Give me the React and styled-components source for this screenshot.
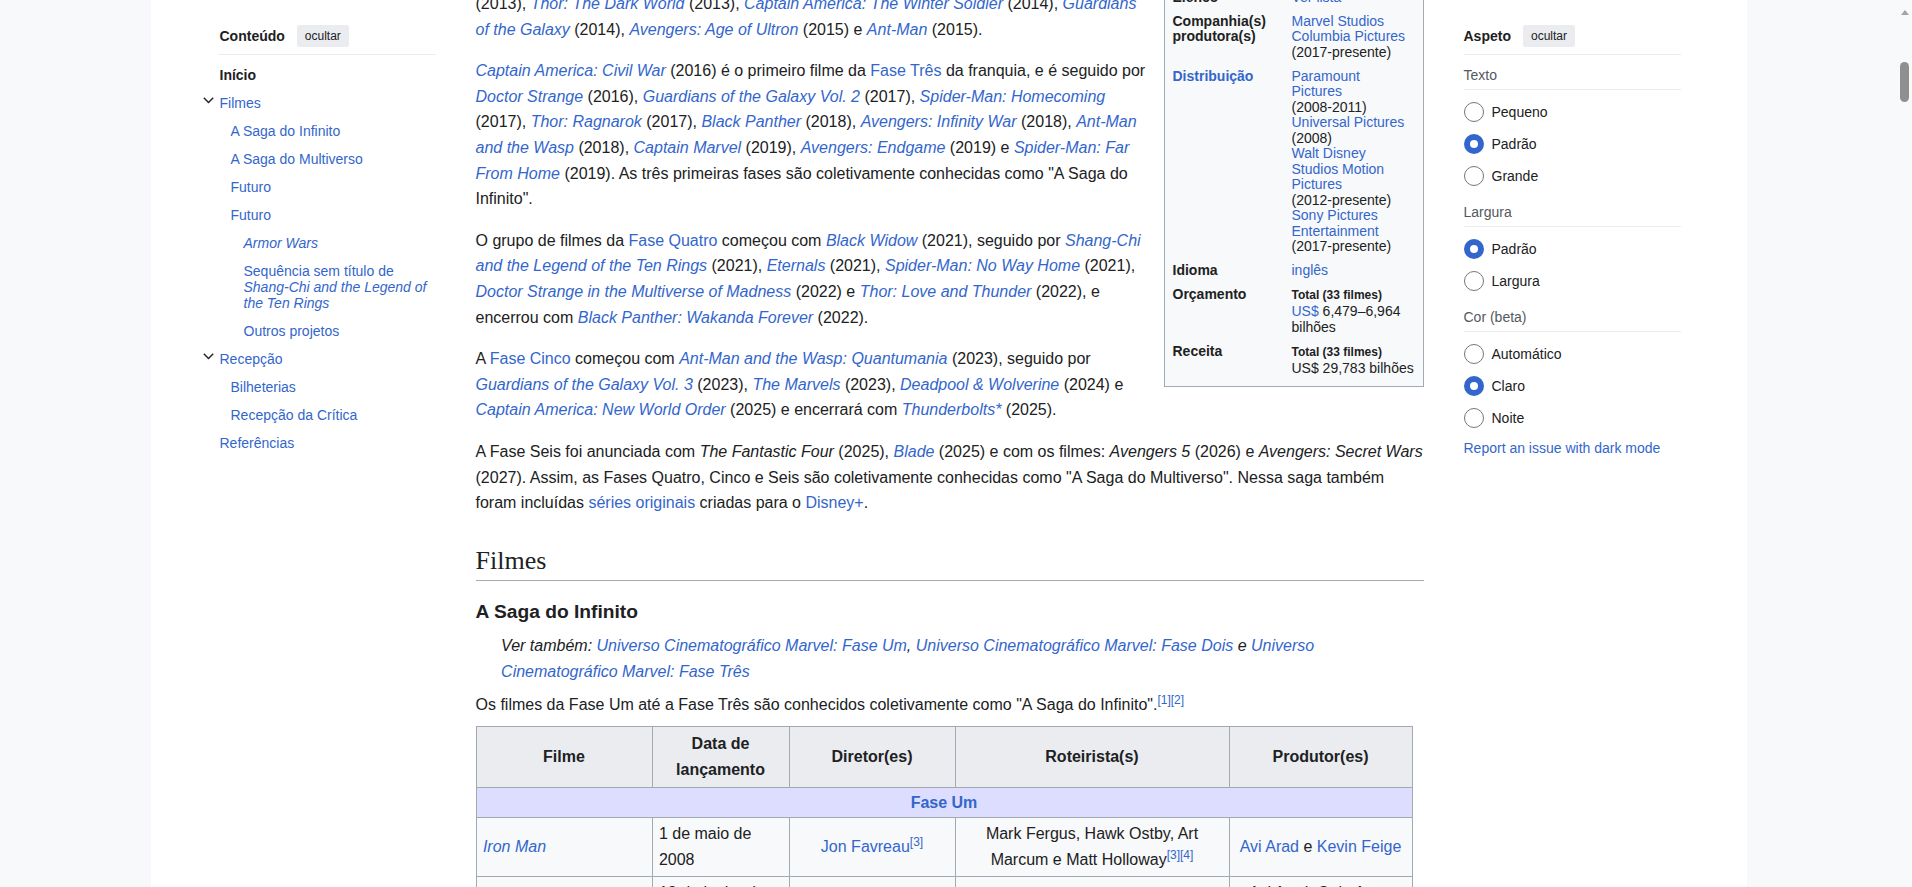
import React from "react";
import styled, { createGlobalStyle } from "styled-components";

const GlobalStyle = createGlobalStyle`
  html, body {
    margin: 0;
    background: #f8f9fa;
  }
  body {
    font-family: "Liberation Sans", Arial, sans-serif;
    color: #202122;
  }
`;

const Shell = styled.div`
  display: flex;
  align-items: stretch;
`;

const Viewport = styled.div`
  flex: 1;
  min-width: 0;
`;

const ScrollGutter = styled.div`
  flex: 0 0 15px;
  display: flex;
  flex-direction: column;
  align-items: center;
  background: #f8f9fa;
`;

const ScrollArrow = styled.span`
  margin-top: 10px;
  width: 0;
  height: 0;
  border-left: 4px solid transparent;
  border-right: 4px solid transparent;
  border-bottom: 5px solid #a3a3a3;
`;

const ScrollThumb = styled.span`
  margin-top: 47px;
  width: 9px;
  height: 40px;
  border-radius: 5px;
  background: #8f8f8f;
`;

const PageContainer = styled.div`
  max-width: 1596px;
  margin: 0 auto;
  box-sizing: border-box;
  padding: 0 66px 0 67px;
  background: #fff;
  overflow: hidden;
`;

const Columns = styled.div`
  display: grid;
  grid-template-columns: 218px 948px 217px;
  column-gap: 40px;
`;

const SidePanel = styled.nav`
  align-self: start;
  padding-top: 25px;
  font-size: 14px;
  line-height: 16px;
`;

const PanelHeader = styled.div`
  display: flex;
  align-items: center;
  gap: 12px;
  height: 22px;
  padding: 0 0 7px ${({ $inset }) => $inset || 0}px;
  border-bottom: 1px solid #eaecf0;
`;

const PanelTitle = styled.span`
  font-weight: bold;
`;

const HideButton = styled.button`
  height: 22px;
  padding: 0 8px;
  border: 0;
  border-radius: 2px;
  background: #eaecf0;
  color: #202122;
  font-family: "Liberation Sans", Arial, sans-serif;
  font-size: 12px;
  cursor: pointer;
`;

const TocList = styled.ul`
  list-style: none;
  margin: 0;
  padding: 6px 0 0;
`;

const TocItem = styled.li`
  display: flex;
  align-items: flex-start;
  padding: 6px 0 6px ${({ $indent }) => $indent}px;
`;

const TocLink = styled.a`
  color: ${({ $active }) => ($active ? "#202122" : "#36c")};
  font-weight: ${({ $active }) => ($active ? "bold" : "normal")};
  text-decoration: none;
`;

const Toggle = styled.span`
  display: inline-flex;
  width: 11px;
  height: 16px;
  align-items: center;
  margin: -3px 6px 0 -17px;
  color: #202122;
`;

const SubHeading = styled.div`
  color: #54595d;
  padding: 12px 0 6px;
  border-bottom: 1px solid #eaecf0;
`;

const RadioList = styled.div`
  padding-top: 6px;
`;

const RadioRow = styled.label`
  display: flex;
  align-items: center;
  gap: 8px;
  height: 32px;
`;

const RadioCircle = styled.span`
  box-sizing: border-box;
  width: 20px;
  height: 20px;
  border-radius: 50%;
  background: #fff;
  border: ${({ $checked }) =>
    $checked ? "6px solid #36c" : "1px solid #72777d"};
`;

const ReportLink = styled.a`
  display: block;
  margin-top: 6px;
  color: #36c;
  text-decoration: none;
`;

const Main = styled.main`
  min-width: 0;
  font-size: 16px;
  line-height: 1.6;
  padding-bottom: 40px;
`;

/* the article is seen scrolled: its first line sits above the window edge */
const ScrolledSection = styled.div`
  margin-top: -34.5px;
`;

const Paragraph = styled.p`
  margin: 0 0 ${({ $tight }) => ($tight ? 8 : 16)}px;
`;

const Link = styled.a`
  color: #36c;
  text-decoration: none;
  font-style: ${({ $italic }) => ($italic ? "italic" : "inherit")};
`;

const Ref = styled.sup`
  font-size: 12px;
  line-height: 1;
  vertical-align: super;
  color: #36c;
`;

const Infobox = styled.aside`
  float: right;
  box-sizing: border-box;
  width: 260px;
  margin: -5px 0 8px 14px;
  padding-bottom: 5px;
  border: 1px solid #a2a9b1;
  background: #f8f9fa;
  font-size: 14px;
  line-height: 15.5px;
`;

const InfoRow = styled.div`
  display: grid;
  grid-template-columns: 119px 1fr;
  padding: 4.25px 8px;
`;

const InfoLabel = styled.div`
  font-weight: bold;
  color: ${({ $link }) => ($link ? "#36c" : "#202122")};
`;

const InfoValue = styled.div`
  white-space: nowrap;
`;

const TotalNote = styled.span`
  display: block;
  font-size: 12px;
  font-weight: bold;
  line-height: 17px;
`;

const Heading2 = styled.h2`
  margin: 27px 0 0;
  padding-bottom: 1px;
  border-bottom: 1px solid #a2a9b1;
  font-family: "Liberation Serif", "Times New Roman", serif;
  font-weight: normal;
  font-size: 26px;
  line-height: 36px;
`;

const Heading3 = styled.h3`
  margin: 16px 0 6.4px;
  font-size: 19.2px;
  line-height: 30px;
  font-weight: bold;
`;

const Hatnote = styled.div`
  font-style: italic;
  padding-left: 25.6px;
  margin-bottom: 8px;
`;

const FilmTable = styled.table`
  width: 937px;
  table-layout: fixed;
  border-collapse: collapse;
  border: 1px solid #a2a9b1;
  background: #f8f9fa;
  color: #202122;
`;

const Th = styled.th`
  padding: 4.2px 6.4px;
  border: 1px solid #a2a9b1;
  background: #eaecf0;
  font-weight: bold;
  text-align: center;
`;

const Td = styled.td`
  padding: 3.2px 6.4px;
  border: 1px solid #a2a9b1;
  text-align: ${({ $align }) => $align || "left"};
`;

const PhaseCell = styled.td`
  padding: 2.1px 6.4px;
  border: 1px solid #a2a9b1;
  background: #ddf;
  font-weight: bold;
  text-align: center;
`;

const ChevronIcon = () => (
  <svg width="11" height="7" viewBox="0 0 11 7" fill="none">
    <path d="M0.8 0.8 L5.5 5.6 L10.2 0.8" stroke="currentColor" strokeWidth="1.4" />
  </svg>
);

const tocItems = [
  { label: "Início", indent: 2, active: true },
  { label: "Filmes", indent: 2, toggle: true },
  { label: "A Saga do Infinito", indent: 13 },
  { label: "A Saga do Multiverso", indent: 13 },
  { label: "Futuro", indent: 13 },
  { label: "Futuro", indent: 13 },
  { label: <i>Armor Wars</i>, indent: 26 },
  {
    label: (
      <>
        Sequência sem título de <i>Shang-Chi and the Legend of the Ten Rings</i>
      </>
    ),
    indent: 26,
  },
  { label: "Outros projetos", indent: 26 },
  { label: "Recepção", indent: 2, toggle: true },
  { label: "Bilheterias", indent: 13 },
  { label: "Recepção da Crítica", indent: 13 },
  { label: "Referências", indent: 2 },
];

const appearance = [
  { title: "Texto", options: ["Pequeno", "Padrão", "Grande"], checked: 1 },
  { title: "Largura", options: ["Padrão", "Largura"], checked: 0 },
  { title: "Cor (beta)", options: ["Automático", "Claro", "Noite"], checked: 1 },
];

const films = [
  ["The Incredible Hulk", "13 de junho de 2008", "Louis Leterrier", "Zak Penn", "Avi Arad, Gale Anne Hurd e Kevin Feige"],
  ["Iron Man 2", "7 de maio de 2010", "Jon Favreau", "Justin Theroux", "Kevin Feige"],
  ["Thor", "6 de maio de 2011", "Kenneth Branagh", "Ashley Edward Miller, Zack Stentz e Don Payne", "Kevin Feige"],
];

const T = ({ children }) => <Link $italic>{children}</Link>;

const App = () => {
  return (
    <>
      <GlobalStyle />
      <Shell>
        <Viewport>
          <PageContainer>
            <Columns>
              <SidePanel>
                <PanelHeader $inset={2}>
                  <PanelTitle>Conteúdo</PanelTitle>
                  <HideButton>ocultar</HideButton>
                </PanelHeader>
                <TocList>
                  {tocItems.map((item, index) => (
                    <TocItem key={index} $indent={item.indent}>
                      {item.toggle && (
                        <Toggle>
                          <ChevronIcon />
                        </Toggle>
                      )}
                      <TocLink $active={item.active}>{item.label}</TocLink>
                    </TocItem>
                  ))}
                </TocList>
              </SidePanel>

              <Main>
                <ScrolledSection>
                  <Infobox>
                    <InfoRow>
                      <InfoLabel>Baseado em</InfoLabel>
                      <InfoValue>
                        <Link>Marvel Comics</Link>
                      </InfoValue>
                    </InfoRow>
                    <InfoRow>
                      <InfoLabel>Elenco</InfoLabel>
                      <InfoValue>
                        <Link>Ver lista</Link>
                      </InfoValue>
                    </InfoRow>
                    <InfoRow>
                      <InfoLabel>
                        Companhia(s)
                        <br />
                        produtora(s)
                      </InfoLabel>
                      <InfoValue>
                        <Link>Marvel Studios</Link>
                        <br />
                        <Link>Columbia Pictures</Link>
                        <br />
                        (2017-presente)
                      </InfoValue>
                    </InfoRow>
                    <InfoRow>
                      <InfoLabel $link>Distribuição</InfoLabel>
                      <InfoValue>
                        <Link>Paramount</Link>
                        <br />
                        <Link>Pictures</Link>
                        <br />
                        (2008-2011)
                        <br />
                        <Link>Universal Pictures</Link>
                        <br />
                        (2008)
                        <br />
                        <Link>Walt Disney</Link>
                        <br />
                        <Link>Studios Motion</Link>
                        <br />
                        <Link>Pictures</Link>
                        <br />
                        (2012-presente)
                        <br />
                        <Link>Sony Pictures</Link>
                        <br />
                        <Link>Entertainment</Link>
                        <br />
                        (2017-presente)
                      </InfoValue>
                    </InfoRow>
                    <InfoRow>
                      <InfoLabel>Idioma</InfoLabel>
                      <InfoValue>
                        <Link>inglês</Link>
                      </InfoValue>
                    </InfoRow>
                    <InfoRow>
                      <InfoLabel>Orçamento</InfoLabel>
                      <InfoValue>
                        <TotalNote>Total (33 filmes)</TotalNote>
                        <Link>US$</Link> 6,479–6,964
                        <br />
                        bilhões
                      </InfoValue>
                    </InfoRow>
                    <InfoRow>
                      <InfoLabel>Receita</InfoLabel>
                      <InfoValue>
                        <TotalNote>Total (33 filmes)</TotalNote>
                        US$ 29,783 bilhões
                      </InfoValue>
                    </InfoRow>
                  </Infobox>

                  <Paragraph>
                    <T>Marvel's The Avengers</T> (2012). A <Link>Fase Dois</Link> inclui <T>Iron Man 3</T>
                    <br />
                    (2013), <T>Thor: The Dark World</T> (2013), <T>Captain America: The Winter Soldier</T>{" "}
                    (2014), <T>Guardians of the Galaxy</T> (2014), <T>Avengers: Age of Ultron</T> (2015) e{" "}
                    <T>Ant-Man</T> (2015).
                  </Paragraph>

                  <Paragraph>
                    <T>Captain America: Civil War</T> (2016) é o primeiro filme da <Link>Fase Três</Link> da
                    franquia, e é seguido por <T>Doctor Strange</T> (2016),{" "}
                    <T>Guardians of the Galaxy Vol. 2</T> (2017), <T>Spider-Man: Homecoming</T> (2017),{" "}
                    <T>Thor: Ragnarok</T> (2017), <T>Black Panther</T> (2018), <T>Avengers: Infinity War</T>{" "}
                    (2018), <T>Ant-Man and the Wasp</T> (2018), <T>Captain Marvel</T> (2019),{" "}
                    <T>Avengers: Endgame</T> (2019) e <T>Spider-Man: Far From Home</T> (2019). As três
                    primeiras fases são coletivamente conhecidas como "A Saga do Infinito".
                  </Paragraph>

                  <Paragraph>
                    O grupo de filmes da <Link>Fase Quatro</Link> começou com <T>Black Widow</T> (2021),
                    seguido por <T>Shang-Chi and the Legend of the Ten Rings</T> (2021), <T>Eternals</T>{" "}
                    (2021), <T>Spider-Man: No Way Home</T> (2021),{" "}
                    <T>Doctor Strange in the Multiverse of Madness</T> (2022) e{" "}
                    <T>Thor: Love and Thunder</T> (2022), e encerrou com{" "}
                    <T>Black Panther: Wakanda Forever</T> (2022).
                  </Paragraph>

                  <Paragraph>
                    A <Link>Fase Cinco</Link> começou com <T>Ant-Man and the Wasp: Quantumania</T> (2023),
                    seguido por <T>Guardians of the Galaxy Vol. 3</T> (2023), <T>The Marvels</T> (2023),{" "}
                    <T>Deadpool &amp; Wolverine</T> (2024) e <T>Captain America: New World Order</T> (2025)
                    e encerrará com <T>Thunderbolts*</T> (2025).
                  </Paragraph>

                  <Paragraph>
                    A Fase Seis foi anunciada com <i>The Fantastic Four</i> (2025), <T>Blade</T> (2025) e com
                    os filmes: <i>Avengers 5</i> (2026) e <i>Avengers: Secret Wars</i> (2027). Assim, as
                    Fases Quatro, Cinco e Seis são coletivamente conhecidas como "A Saga do Multiverso".
                    Nessa saga também foram incluídas <Link>séries originais</Link> criadas para o{" "}
                    <Link>Disney+</Link>.
                  </Paragraph>
                </ScrolledSection>

                <Heading2>Filmes</Heading2>
                <Heading3>A Saga do Infinito</Heading3>
                <Hatnote>
                  Ver também: <Link>Universo Cinematográfico Marvel: Fase Um</Link>,{" "}
                  <Link>Universo Cinematográfico Marvel: Fase Dois</Link> e{" "}
                  <Link>Universo Cinematográfico Marvel: Fase Três</Link>
                </Hatnote>
                <Paragraph $tight>
                  Os filmes da Fase Um até a Fase Três são conhecidos coletivamente como "A Saga do
                  Infinito".<Ref>[1][2]</Ref>
                </Paragraph>

                <FilmTable>
                  <colgroup>
                    <col style={{ width: 176 }} />
                    <col style={{ width: 137 }} />
                    <col style={{ width: 166 }} />
                    <col style={{ width: 274 }} />
                    <col style={{ width: 183 }} />
                  </colgroup>
                  <thead>
                    <tr>
                      <Th>Filme</Th>
                      <Th>Data de lançamento</Th>
                      <Th>Diretor(es)</Th>
                      <Th>Roteirista(s)</Th>
                      <Th>Produtor(es)</Th>
                    </tr>
                  </thead>
                  <tbody>
                    <tr>
                      <PhaseCell colSpan={5}>
                        <Link>Fase Um</Link>
                      </PhaseCell>
                    </tr>
                    <tr>
                      <Td>
                        <T>Iron Man</T>
                      </Td>
                      <Td>1 de maio de 2008</Td>
                      <Td $align="center">
                        <Link>Jon Favreau</Link>
                        <Ref>[3]</Ref>
                      </Td>
                      <Td $align="center">
                        Mark Fergus, Hawk Ostby, Art Marcum e Matt Holloway<Ref>[3][4]</Ref>
                      </Td>
                      <Td $align="center">
                        <Link>Avi Arad</Link> e <Link>Kevin Feige</Link>
                      </Td>
                    </tr>
                    {films.map((film, index) => (
                      <tr key={index}>
                        <Td>
                          <T>{film[0]}</T>
                        </Td>
                        <Td>{film[1]}</Td>
                        <Td $align="center">
                          <Link>{film[2]}</Link>
                        </Td>
                        <Td $align="center">{film[3]}</Td>
                        <Td $align="center">{film[4]}</Td>
                      </tr>
                    ))}
                  </tbody>
                </FilmTable>
              </Main>

              <SidePanel>
                <PanelHeader>
                  <PanelTitle>Aspeto</PanelTitle>
                  <HideButton>ocultar</HideButton>
                </PanelHeader>
                {appearance.map((group) => (
                  <div key={group.title}>
                    <SubHeading>{group.title}</SubHeading>
                    <RadioList>
                      {group.options.map((option, index) => (
                        <RadioRow key={option}>
                          <RadioCircle $checked={index === group.checked} />
                          {option}
                        </RadioRow>
                      ))}
                    </RadioList>
                  </div>
                ))}
                <ReportLink>Report an issue with dark mode</ReportLink>
              </SidePanel>
            </Columns>
          </PageContainer>
        </Viewport>
        <ScrollGutter>
          <ScrollArrow />
          <ScrollThumb />
        </ScrollGutter>
      </Shell>
    </>
  );
};

export default App;
